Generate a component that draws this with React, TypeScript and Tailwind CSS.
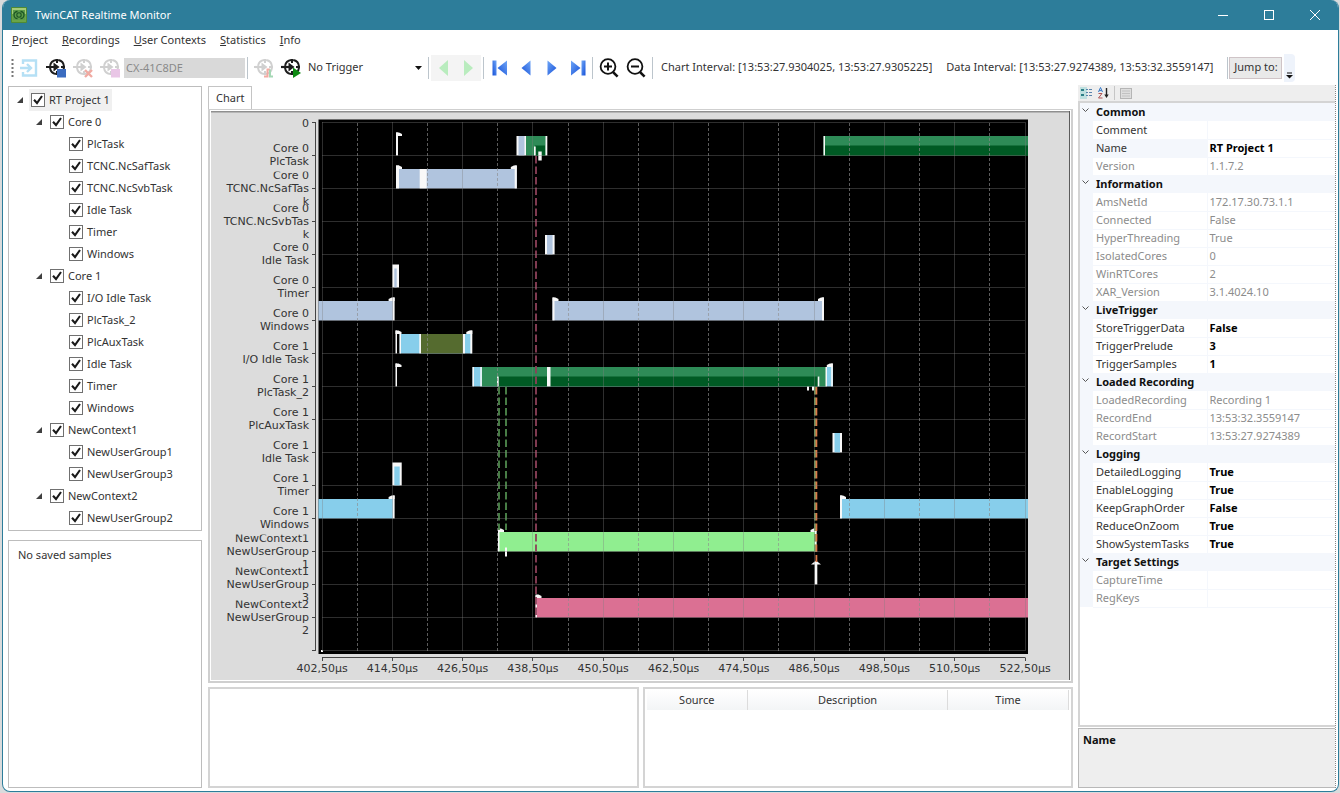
import type { ReactNode } from "react";

type TreeItem = { label: string; depth: number; open?: boolean };

const TREE: TreeItem[] = [
  { label: "RT Project 1", depth: 0, open: true },
  { label: "Core 0", depth: 1, open: true },
  { label: "PlcTask", depth: 2 },
  { label: "TCNC.NcSafTask", depth: 2 },
  { label: "TCNC.NcSvbTask", depth: 2 },
  { label: "Idle Task", depth: 2 },
  { label: "Timer", depth: 2 },
  { label: "Windows", depth: 2 },
  { label: "Core 1", depth: 1, open: true },
  { label: "I/O Idle Task", depth: 2 },
  { label: "PlcTask_2", depth: 2 },
  { label: "PlcAuxTask", depth: 2 },
  { label: "Idle Task", depth: 2 },
  { label: "Timer", depth: 2 },
  { label: "Windows", depth: 2 },
  { label: "NewContext1", depth: 1, open: true },
  { label: "NewUserGroup1", depth: 2 },
  { label: "NewUserGroup3", depth: 2 },
  { label: "NewContext2", depth: 1, open: true },
  { label: "NewUserGroup2", depth: 2 },
];

type Prop = { name: string; value?: string; readOnly?: boolean };

const PROPERTIES: { title: string; props: Prop[] }[] = [
  {
    title: "Common",
    props: [
      { name: "Comment" },
      { name: "Name", value: "RT Project 1" },
      { name: "Version", value: "1.1.7.2", readOnly: true },
    ],
  },
  {
    title: "Information",
    props: [
      { name: "AmsNetId", value: "172.17.30.73.1.1", readOnly: true },
      { name: "Connected", value: "False", readOnly: true },
      { name: "HyperThreading", value: "True", readOnly: true },
      { name: "IsolatedCores", value: "0", readOnly: true },
      { name: "WinRTCores", value: "2", readOnly: true },
      { name: "XAR_Version", value: "3.1.4024.10", readOnly: true },
    ],
  },
  {
    title: "LiveTrigger",
    props: [
      { name: "StoreTriggerData", value: "False" },
      { name: "TriggerPrelude", value: "3" },
      { name: "TriggerSamples", value: "1" },
    ],
  },
  {
    title: "Loaded Recording",
    props: [
      { name: "LoadedRecording", value: "Recording 1", readOnly: true },
      { name: "RecordEnd", value: "13:53:32.3559147", readOnly: true },
      { name: "RecordStart", value: "13:53:27.9274389", readOnly: true },
    ],
  },
  {
    title: "Logging",
    props: [
      { name: "DetailedLogging", value: "True" },
      { name: "EnableLogging", value: "True" },
      { name: "KeepGraphOrder", value: "False" },
      { name: "ReduceOnZoom", value: "True" },
      { name: "ShowSystemTasks", value: "True" },
    ],
  },
  {
    title: "Target Settings",
    props: [
      { name: "CaptureTime", readOnly: true },
      { name: "RegKeys", readOnly: true },
    ],
  },
];

function TitleBar() {
  return (
    <header className="flex h-[30px] items-center bg-[#2d7d9a] pl-2 text-white">
      <svg width="16" height="16" viewBox="0 0 16 16" aria-hidden>
        <rect width="16" height="16" rx="1" fill="#4f8a34" />
        <rect x="1" y="1" width="14" height="6" fill="#a5cb78" />
        <rect x="1" y="7" width="14" height="8" fill="#6aa548" />
        <rect x="2" y="3" width="12" height="10" fill="#5c9c49" />
        <path d="M6.5 4.5a3.4 3.4 0 100 7M9.5 4.5a3.4 3.4 0 110 7" fill="none" stroke="#1c5424" strokeWidth="1.3" />
        <circle cx="8" cy="8" r="2.2" fill="none" stroke="#1c5424" strokeWidth="1.1" />
      </svg>
      <h1 className="ml-2 flex-1 pt-px text-[11px]">TwinCAT Realtime Monitor</h1>
      <button aria-label="Minimize" className="flex h-full w-[46px] items-center justify-center">
        <svg width="10" height="10" viewBox="0 0 10 10" stroke="white">
          <path d="M0 5.5h10" />
        </svg>
      </button>
      <button aria-label="Maximize" className="flex h-full w-[46px] items-center justify-center">
        <svg width="10" height="10" viewBox="0 0 10 10" stroke="white" fill="none">
          <rect x="0.5" y="0.5" width="9" height="9" />
        </svg>
      </button>
      <button aria-label="Close" className="flex h-full w-[46px] items-center justify-center">
        <svg width="10" height="10" viewBox="0 0 10 10" stroke="white">
          <path d="M0 0l10 10M10 0L0 10" />
        </svg>
      </button>
    </header>
  );
}

function MenuBar() {
  return (
    <nav className="flex h-5 items-center gap-[14px] pl-[9px] text-[11px]">
      {["Project", "Recordings", "User Contexts", "Statistics", "Info"].map((item) => (
        <button key={item}>
          <span className="underline">{item[0]}</span>
          {item.slice(1)}
        </button>
      ))}
    </nav>
  );
}

function Separator() {
  return <span className="h-[22px] w-px shrink-0 bg-[#bcc5cc]" />;
}

// Crosshair with an incoming arrow; the badge sits in the lower right corner.
function TargetIcon({ faded, children }: { faded?: boolean; children: ReactNode }) {
  const color = faded ? "#d0d0d0" : "#1c1c1c";
  return (
    <svg width="20" height="20" viewBox="0 0 20 20" fill="none">
      <g stroke={color}>
        <circle cx="11" cy="9" r="7" strokeWidth="2" strokeDasharray="9 2" strokeDashoffset="-1" />
        <path d="M11 1v4M11 13v4M15 9h4" strokeWidth="2" />
        <path d="M0 9h9" strokeWidth="2.2" />
        <path d="M7.5 4.5l6 4.5-6 4.5z" fill={color} stroke="none" />
      </g>
      {children}
    </svg>
  );
}

function ToolButton({ label, disabled, children }: { label: string; disabled?: boolean; children: ReactNode }) {
  return (
    <button aria-label={label} disabled={disabled} className="flex h-[22px] min-w-5 shrink-0 items-center justify-center">
      {children}
    </button>
  );
}

function ZoomIcon({ plus }: { plus?: boolean }) {
  return (
    <svg width="20" height="20" viewBox="0 0 20 20" fill="none" stroke="#111">
      <circle cx="9" cy="8.5" r="7.4" strokeWidth="1.8" />
      <path d="M5 8.5h8" strokeWidth="2" />
      {plus && <path d="M9 4.5v8" strokeWidth="2" />}
      <path d="M13.8 13.8l4.8 4.8" strokeWidth="2.6" />
    </svg>
  );
}

function NavIcon({ back, bar }: { back?: boolean; bar?: boolean }) {
  return (
    <svg width="16" height="16" viewBox="0 0 16 16">
      <g transform={back ? "translate(16 0) scale(-1 1)" : undefined} fill="url(#nav-blue)">
        <path d={bar ? "M1 0.5l9.5 7.5L1 15.5z" : "M3.5 0.5l9 7.5-9 7.5z"} />
        {bar && <path d="M11.5 0.5h4v15h-4z" />}
      </g>
    </svg>
  );
}

function Toolbar() {
  return (
    <div className="flex h-[35px] items-center pl-2 text-[11px]">
      <svg width="3" height="20" viewBox="0 0 3 20" aria-hidden className="shrink-0">
        <defs>
          <linearGradient id="nav-blue" x1="0" y1="0" x2="1" y2="1">
            <stop offset="0" stopColor="#6fa6f7" />
            <stop offset="1" stopColor="#1550d8" />
          </linearGradient>
        </defs>
        <path d="M1.5 1v19" stroke="#777" strokeWidth="2" strokeDasharray="2 2" />
      </svg>
      <div className="ml-[5px] flex shrink-0 gap-[7px]">
        <ToolButton label="Login" disabled>
          <svg width="18" height="18" viewBox="0 0 18 18" fill="none" stroke="#b5e0f5" strokeWidth="2.4">
            <path d="M3 5V1.5h13v15H3V13M0 9h10M7 5l4 4-4 4" />
          </svg>
        </ToolButton>
        <ToolButton label="Record">
          <TargetIcon>
            <rect x="11" y="11" width="9" height="8.5" fill="#3b6cc0" />
          </TargetIcon>
        </ToolButton>
        <ToolButton label="Discard" disabled>
          <TargetIcon faded>
            <path d="M12 12l7 7M19 12l-7 7" stroke="#f0aaa2" strokeWidth="2.4" />
          </TargetIcon>
        </ToolButton>
        <ToolButton label="Stop" disabled>
          <TargetIcon faded>
            <rect x="11" y="11" width="9" height="8.5" fill="#e9c6e6" />
          </TargetIcon>
        </ToolButton>
      </div>
      <input
        aria-label="Target"
        disabled
        defaultValue="CX-41C8DE"
        className="ml-1 h-5 w-[121px] shrink-0 bg-[#d9d9d9] px-[2px] text-[#8a8a8a]"
      />
      <span className="w-[2px] shrink-0" />
      <Separator />
      <div className="ml-[6px] flex shrink-0 gap-[7px]">
        <ToolButton label="Trigger setup" disabled>
          <TargetIcon faded>
            <path d="M10 18.5h3.5v-7h2.5" stroke="#f2aaa2" strokeWidth="2" />
            <path d="M16 11.5v7h3" stroke="#a5d8b5" strokeWidth="2" />
          </TargetIcon>
        </ToolButton>
        <ToolButton label="Start trigger">
          <TargetIcon>
            <path d="M12 9.5l8 5.5-8 5z" fill="#0d8a12" />
          </TargetIcon>
        </ToolButton>
      </div>
      <div className="ml-[7px] grid w-[117px] shrink-0 items-center">
        <select aria-label="Trigger" className="col-start-1 row-start-1 h-5 appearance-none bg-transparent">
          <option>No Trigger</option>
        </select>
        <svg width="7" height="4" viewBox="0 0 7 4" className="pointer-events-none col-start-1 row-start-1 mr-[3px] justify-self-end">
          <path d="M0 0h7L3.5 4z" fill="#111" />
        </svg>
      </div>
      <span className="w-[3px] shrink-0" />
      <Separator />
      <div className="mx-[2px] flex h-[26px] w-[50px] shrink-0 items-center justify-around bg-[#f4f4f4]">
        <ToolButton label="Previous sample" disabled>
          <svg width="9" height="16" viewBox="0 0 9 16">
            <path d="M9 0v16L0 8z" fill="#b9ecbe" />
          </svg>
        </ToolButton>
        <ToolButton label="Next sample" disabled>
          <svg width="9" height="16" viewBox="0 0 9 16">
            <path d="M0 0v16l9-8z" fill="#b9ecbe" />
          </svg>
        </ToolButton>
      </div>
      <Separator />
      <div className="ml-[6px] mr-1 flex shrink-0 gap-[6px]">
        <ToolButton label="First">
          <NavIcon back bar />
        </ToolButton>
        <ToolButton label="Previous">
          <NavIcon back />
        </ToolButton>
        <ToolButton label="Next">
          <NavIcon />
        </ToolButton>
        <ToolButton label="Last">
          <NavIcon bar />
        </ToolButton>
      </div>
      <Separator />
      <div className="mx-[6px] flex shrink-0 gap-[7px]">
        <ToolButton label="Zoom in">
          <ZoomIcon plus />
        </ToolButton>
        <ToolButton label="Zoom out">
          <ZoomIcon />
        </ToolButton>
      </div>
      <Separator />
      <span className="ml-2 whitespace-nowrap">Chart Interval: [13:53:27.9304025, 13:53:27.9305225]</span>
      <span className="ml-[14px] whitespace-nowrap">Data Interval: [13:53:27.9274389, 13:53:32.3559147]</span>
      <span className="w-[14px] shrink-0" />
      <Separator />
      <button className="ml-px h-[22px] w-[53px] shrink-0 whitespace-nowrap border border-[#cfc4c7] bg-[#e9e9e9]">Jump to:</button>
      <button aria-label="Toolbar options" className="ml-[2px] flex h-[28px] w-[11px] shrink-0 items-end justify-center rounded-r-sm bg-[#eef3fb] pb-[3px]">
        <svg width="7" height="7" viewBox="0 0 7 7">
          <path d="M1 1h5" stroke="#111" />
          <path d="M0 3h7L3.5 6.5z" fill="#111" />
        </svg>
      </button>
    </div>
  );
}

const INDENT = ["pl-[8px]", "pl-[27px]", "pl-[46px]"];

function TreeRow({ item, selected }: { item: TreeItem; selected?: boolean }) {
  return (
    <li className={`flex h-[22px] items-center ${INDENT[item.depth]}`}>
      <span className="w-3 shrink-0">
        {item.open && (
          <svg width="6" height="6" viewBox="0 0 6 6" aria-hidden>
            <path d="M6 0v6H0z" fill="#404040" />
          </svg>
        )}
      </span>
      <label className={`flex h-full items-center gap-1 px-[2px] ${selected ? "bg-[#f0f0f0]" : ""}`}>
        <span className="grid">
          <input
            type="checkbox"
            defaultChecked
            className="peer col-start-1 row-start-1 size-[14px] appearance-none border border-[#707070] bg-white"
          />
          <svg viewBox="0 0 14 14" className="pointer-events-none invisible col-start-1 row-start-1 size-[14px] peer-checked:visible">
            <path d="M3 6.8l3 3.2 5-7" fill="none" stroke="#1a1a1a" strokeWidth="2.1" />
          </svg>
        </span>
        <span className="whitespace-nowrap">{item.label}</span>
      </label>
    </li>
  );
}

function Sidebar() {
  return (
    <aside className="flex w-[194px] shrink-0 flex-col gap-[9px] pt-px text-[11px]">
      <ul className="border border-[#bdbdbd] pt-[2px] pb-px">
        {TREE.map((item, i) => (
          <TreeRow key={i} item={item} selected={i === 0} />
        ))}
      </ul>
      <div className="flex-1 border border-[#bdbdbd] px-[9px] py-[6px]">No saved samples</div>
    </aside>
  );
}

const ROW_LABELS = [
  ["Core 0", "PlcTask"],
  ["Core 0", "TCNC.NcSafTas", "k"],
  ["Core 0", "TCNC.NcSvbTas", "k"],
  ["Core 0", "Idle Task"],
  ["Core 0", "Timer"],
  ["Core 0", "Windows"],
  ["Core 1", "I/O Idle Task"],
  ["Core 1", "PlcTask_2"],
  ["Core 1", "PlcAuxTask"],
  ["Core 1", "Idle Task"],
  ["Core 1", "Timer"],
  ["Core 1", "Windows"],
  ["NewContext1", "NewUserGroup", "1"],
  ["NewContext1", "NewUserGroup", "3"],
  ["NewContext2", "NewUserGroup", "2"],
];

const TIME_LABELS = [
  "402,50µs", "414,50µs", "426,50µs", "438,50µs", "450,50µs", "462,50µs",
  "474,50µs", "486,50µs", "498,50µs", "510,50µs", "522,50µs",
];

const STEEL = "#b0c4de";
const SKY = "#87ceeb";
const SEA = "#2e8b57";
const DARK = "#005a24";
const WHITE = "#f8f8f8";

const rowY = (row: number) => 122.5 + row * 33;
const tickX = (i: number) => 322 + i * 70.3;

// [row, x1, x2, colour, top offset, bottom offset], offsets are relative to the row line
type Bar = [number, number, number, string, number?, number?];

const BARS: Bar[] = [
  [1, 396, 398, WHITE, -23],
  [1, 516.5, 526, WHITE],
  [1, 518.5, 524.5, STEEL],
  [1, 526, 546, SEA],
  [1, 535, 545, DARK, -10],
  [1, 545.5, 547.3, WHITE],
  [1, 534, 535.7, WHITE, -9],
  [1, 538.3, 541.7, WHITE, -4, 5],
  [1, 823.5, 1028, SEA],
  [1, 823.5, 1028, DARK, -10],
  [1, 823.5, 825, WHITE],
  [2, 396, 516.8, STEEL],
  [2, 396, 399, WHITE, -23],
  [2, 419.7, 426.7, WHITE],
  [2, 514.7, 516.8, WHITE, -23],
  [4, 545, 554.6, WHITE],
  [4, 547, 552.6, STEEL],
  [5, 392.3, 399, WHITE, -23],
  [5, 394.3, 396.7, STEEL, -19],
  [6, 318.5, 393, STEEL],
  [6, 392.7, 394.6, WHITE, -23],
  [6, 552.5, 824, STEEL],
  [6, 552.5, 554.5, WHITE, -23],
  [6, 822, 824, WHITE, -23],
  [7, 395.5, 397, WHITE, -23],
  [7, 399.7, 472, SKY],
  [7, 399.5, 401, WHITE],
  [7, 420.5, 464, "#556b2f"],
  [7, 419.3, 421, WHITE],
  [7, 463, 465, WHITE],
  [7, 470.3, 472.3, WHITE, -23],
  [8, 395.5, 397, WHITE, -23],
  [8, 472.5, 833, SKY],
  [8, 482, 826, SEA],
  [8, 498, 819, DARK, -10],
  [8, 472.5, 474, WHITE],
  [8, 480.3, 481.8, WHITE],
  [8, 497, 498.7, WHITE, -10],
  [8, 547, 550.5, WHITE],
  [8, 817.7, 819.3, WHITE, -10],
  [8, 807, 809, WHITE, 0, 4],
  [8, 812, 814, WHITE, 0, 4],
  [8, 825.5, 827, WHITE],
  [8, 831.2, 832.8, WHITE, -23],
  [10, 832.5, 842, WHITE],
  [10, 834.5, 840, SKY],
  [11, 392.3, 401.7, WHITE, -23],
  [11, 394.3, 399.7, SKY, -19],
  [12, 318.5, 393, SKY],
  [12, 392.7, 394.6, WHITE, -23],
  [12, 840, 1028, SKY],
  [12, 840, 842, WHITE, -23],
  [13, 498, 816.5, "#90ee90"],
  [13, 498, 499.5, WHITE, -22],
  [13, 815, 816.5, WHITE, -22],
  [13, 505, 507, WHITE, -4, 5],
  [14, 814.7, 817.3, WHITE, -22],
  [15, 535.5, 1028, "#db7093"],
  [15, 535.5, 537, WHITE, -22],
];

// Small flags at the top of a task's start (pointing right) and end (pointing left)
const FLAGS: [number, number, 1 | -1][] = [
  [1, 396, 1], [2, 396, 1], [2, 516.8, -1], [6, 394.6, -1], [6, 552.5, 1], [6, 824, -1],
  [7, 395.5, 1], [7, 472.3, -1], [8, 395.5, 1], [8, 832.8, -1], [12, 394.6, -1],
  [12, 840, 1], [13, 498, 1], [13, 816.5, -1], [15, 535.5, 1],
];

// [x, y1, y2, colour]
const LINKS: [number, number, number, string][] = [
  [499, 387, 530, "#4f8a4d"],
  [506, 387, 530, "#4f8a4d"],
  [536, 156, 618, "#8d4159"],
  [815, 387, 552, "#6aa35c"],
  [816.4, 387, 562, "#dc7a4a"],
];

function Chart() {
  return (
    <svg viewBox="211 111 859 569" className="block w-full bg-[#dcdcdc]" role="img" aria-label="Task chart">
      <path d="M211 111.5h859" stroke="#8f8f8f" strokeWidth="2" />
      <path d="M1069.5 111v569" stroke="#5c5c5c" />
      <rect x="318.5" y="119.5" width="709.5" height="534.5" fill="#000" />
      <path d="M315.5 122v529" stroke="#444" />
      <path d="M322 657.5h703.5" stroke="#444" />

      <g fontFamily='"DejaVu Sans", Verdana, sans-serif' fontSize="11" fill="#333" textAnchor="end">
        <path d="M312 122.5h4M312 650.5h4" stroke="#444" />
        <text x="309" y="127">0</text>
        {ROW_LABELS.map((lines, i) => {
          const y = rowY(i + 1);
          const first = lines.length === 3 ? y - 10 : y - 4;
          return (
            <g key={i}>
              <path d={`M312 ${y}h4`} stroke="#444" />
              <clipPath id={`row-${i}`}>
                <rect x="211" y={y - 17} width="100" height="34" />
              </clipPath>
              <g clipPath={`url(#row-${i})`}>
                {lines.map((line, n) => (
                  <text key={n} x="309" y={first + n * 13}>
                    {line}
                  </text>
                ))}
              </g>
            </g>
          );
        })}
      </g>

      {BARS.map(([row, x1, x2, color, top = -19.5, bottom = 0], i) => (
        <rect key={i} x={x1} y={rowY(row) + top} width={x2 - x1} height={bottom - top} fill={color} />
      ))}
      {FLAGS.map(([row, x, dir], i) => (
        <path key={i} d={`M${x} ${rowY(row) - 23}h${dir * 3}l${dir * 3} 1.5v2h${dir * -6}z`} fill={WHITE} />
      ))}
      <path d="M816 560.5l5 4h-10z" fill={WHITE} />
      <rect x="321" y="650" width="2" height="2" fill="#fff" />

      {LINKS.map(([x, y1, y2, color], i) => (
        <path key={i} d={`M${x} ${y1}V${y2}`} stroke={color} strokeWidth="1.8" strokeDasharray="7.5 3" />
      ))}

      <g stroke="#808080" strokeOpacity="0.36">
        {Array.from({ length: 17 }, (_, i) => (
          <path key={i} d={`M322 ${rowY(i)}h703`} />
        ))}
        {TIME_LABELS.map((_, i) => (
          <path key={i} d={`M${Math.floor(tickX(i)) + 0.5} 122V651`} />
        ))}
      </g>
      <g stroke="#8c8c8c" strokeOpacity="0.65">
        {TIME_LABELS.slice(1).map((_, i) => (
          <path key={i} d={`M${Math.floor(tickX(i + 0.5)) + 0.5} 123V651`} strokeDasharray="3 2" />
        ))}
      </g>

      <g fontFamily='"DejaVu Sans", Verdana, sans-serif' fontSize="11" fill="#333" textAnchor="middle">
        {TIME_LABELS.map((label, i) => (
          <g key={label}>
            <path d={`M${Math.floor(tickX(i)) + 0.5} 658v3`} stroke="#444" />
            <text x={tickX(i)} y="672">
              {label}
            </text>
          </g>
        ))}
      </g>
    </svg>
  );
}

function EventTable() {
  return (
    <div className="border-2 border-[#d4d4d4] px-[2px] pt-px">
      <table className="w-full table-fixed border-collapse">
        <thead>
          <tr className="h-5 bg-linear-to-b from-white to-[#f3f5f6]">
            <th className="w-[101px] border-r border-[#dcdcdc] font-normal">Source</th>
            <th className="w-[200px] border-r border-[#dcdcdc] font-normal">Description</th>
            <th className="border-r border-[#dcdcdc] font-normal">Time</th>
          </tr>
        </thead>
      </table>
    </div>
  );
}

function Workspace() {
  return (
    <main className="flex min-w-0 flex-1 flex-col pt-px text-[11px]">
      <div role="tablist" className="flex">
        <button role="tab" aria-selected className="-mb-px h-6 border border-b-0 border-[#c4c4c4] bg-white px-[7px]">
          Chart
        </button>
      </div>
      <div className="border-2 border-t border-[#cfcfcf] p-px">
        <Chart />
      </div>
      <div className="mt-1 grid flex-1 grid-cols-2 gap-1">
        <div className="border-2 border-[#d4d4d4]" />
        <EventTable />
      </div>
    </main>
  );
}

function PropertyGrid() {
  return (
    <aside className="flex w-[258px] shrink-0 flex-col border-r border-dotted border-[#888] text-[11px]">
      <div className="flex h-4 items-center gap-[5px] bg-[#eeeeee] pl-[2px]">
        <button aria-label="Categorized">
          <svg width="13" height="12" viewBox="0 0 13 12">
            <path d="M0 0h7v12H0z" fill="#bfe0e0" />
            <path d="M1 2h3v2H1zM1 7h3v2H1z" fill="#2c7f86" />
            <path d="M6 2.5h2M9 2.5h3M6 5.5h2M9 5.5h3M6 8.5h2M9 8.5h3" stroke="#5b84ad" />
          </svg>
        </button>
        <button aria-label="Alphabetical">
          <svg width="11" height="12" viewBox="0 0 11 12" fill="none">
            <path d="M0.5 5L2.5 0.5 4.5 5M1.2 3.6h2.6" stroke="#3478c8" />
            <path d="M0.5 6.5h3.5L0.5 11h4" stroke="#b05656" />
            <path d="M8.5 1v8" stroke="#222" strokeWidth="1.4" />
            <path d="M6.3 7.5h4.4L8.5 11z" fill="#222" />
          </svg>
        </button>
        <span className="h-[14px] w-px bg-[#c6c6c6]" />
        <button aria-label="Property pages" disabled>
          <svg width="12" height="11" viewBox="0 0 12 11">
            <rect x="0.5" y="0.5" width="11" height="10" fill="#dedede" stroke="#b5b5b5" />
            <path d="M2 3h8M2 5.5h8M2 8h8" stroke="#c2c2c2" />
          </svg>
        </button>
      </div>
      <div className="flex-1 border-2 border-r-0 border-[#d4d4d4]">
        <table className="w-full table-fixed border-collapse">
          <colgroup>
            <col className="w-[13px]" />
            <col className="w-[114px]" />
            <col />
          </colgroup>
          {PROPERTIES.map((group) => (
            <tbody key={group.title}>
              <tr className="h-[18px] bg-[#f4f7fc]">
                <td className="pl-[2px]">
                  <svg width="7" height="5" viewBox="0 0 7 5" fill="none" stroke="#555" className="mb-1">
                    <path d="M0.5 0.5l3 3 3-3" />
                  </svg>
                </td>
                <th colSpan={2} className="p-0 pl-[3px] text-left font-bold leading-4 text-[#111]">
                  {group.title}
                </th>
              </tr>
              {group.props.map((prop) => (
                <tr key={prop.name} className={`h-[18px] ${prop.readOnly ? "text-[#8c8c8c]" : "text-[#333]"}`}>
                  <td className="bg-[#f4f7fc]" />
                  <td
                    className={`border-r border-b border-[#f4f7fc] p-0 pl-[3px] leading-4 ${
                      prop.name === "Name" ? "bg-[#f4f7fc]" : ""
                    }`}
                  >
                    {prop.name}
                  </td>
                  <td
                    className={`border-b border-[#f4f7fc] p-0 pl-[2px] leading-4 ${
                      prop.readOnly ? "" : "font-bold text-black"
                    }`}
                  >
                    {prop.value}
                  </td>
                </tr>
              ))}
            </tbody>
          ))}
        </table>
      </div>
      <div className="mt-px h-[60px] border border-r-0 border-[#b8b8b8] bg-[#eeeeee] px-[4px] py-[3px] font-bold leading-4 text-[#111]">
        Name
      </div>
    </aside>
  );
}

export default function App() {
  return (
    <div className="flex min-h-screen bg-[#d9dbdc] pr-px pb-px pl-[2px] font-['Noto_Sans',sans-serif] text-[#333]">
      <div className="flex min-w-0 flex-1 flex-col overflow-hidden rounded-lg border-r border-b border-l border-[#2d7d9a] bg-white">
        <TitleBar />
        <MenuBar />
        <Toolbar />
        <div className="flex flex-1 pr-[2px] pb-[3px] pl-[5px]">
          <Sidebar />
          <span className="w-[6px] shrink-0" />
          <Workspace />
          <span className="w-[5px] shrink-0" />
          <PropertyGrid />
        </div>
      </div>
    </div>
  );
}
